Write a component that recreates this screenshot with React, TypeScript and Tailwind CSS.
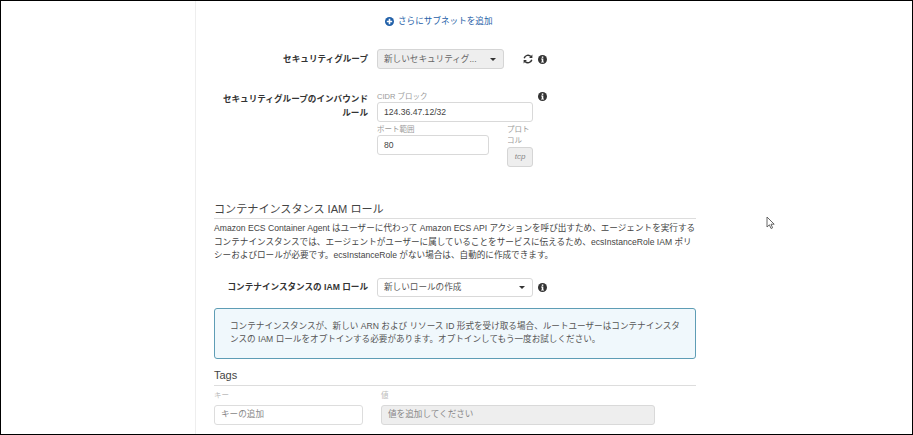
const font = "font-['Liberation_Sans','Noto_Sans_CJK_JP',sans-serif]";

function InfoIcon() {
  return (
    <svg width="9" height="9" viewBox="0 0 10 10" className="shrink-0">
      <circle cx="5" cy="5" r="5" fill="#333" />
      <rect x="4.2" y="1.6" width="1.7" height="1.6" fill="#fff" />
      <path d="M3.5 4h2.4v3.4h.8v1H3.4v-1h.8V5h-.7z" fill="#fff" />
    </svg>
  );
}

function RefreshIcon() {
  return (
    <svg width="10" height="10" viewBox="0 0 10 10" fill="none" className="shrink-0">
      <path d="M1.2 4.2A3.9 3.9 0 0 1 7.9 2.6" stroke="#333" strokeWidth="1.5" />
      <path d="M8.8 5.8A3.9 3.9 0 0 1 2.1 7.4" stroke="#333" strokeWidth="1.5" />
      <path d="M9.4 0.6v3.3H6.1z" fill="#333" />
      <path d="M0.6 9.4V6.1h3.3z" fill="#333" />
    </svg>
  );
}

function PlusIcon() {
  return (
    <svg width="9" height="9" viewBox="0 0 10 10" className="shrink-0">
      <circle cx="5" cy="5" r="5" fill="#1f5fa8" />
      <path d="M4.1 2h1.8v2.1H8v1.8H5.9V8H4.1V5.9H2V4.1h2.1z" fill="#fff" />
    </svg>
  );
}

function Caret() {
  return <span className="h-0 w-0 border-x-[3px] border-t-[3px] border-x-transparent border-t-[#333]" />;
}

export default function App() {
  return (
    <div className={`${font} relative flex h-[435px] w-[913px] overflow-hidden border border-black bg-white text-[8.6px] text-[#444]`}>
      <div className="w-[195px] shrink-0 border-r border-[#eeeeee]" />

      <div className="w-[482px] shrink-0 ml-[18px] flex flex-col">
        <div className="mt-[14px] ml-[171px] flex h-[12px] items-center gap-[4px] text-[#1f5fa8]">
          <PlusIcon />
          <span className="whitespace-nowrap">さらにサブネットを追加</span>
        </div>

        <div className="mt-[22px] flex items-center">
          <div className="w-[154px] whitespace-nowrap text-right font-bold text-[#333]">セキュリティグループ</div>
          <div className="ml-[9px] flex h-[20px] w-[127px] items-center justify-between rounded-[3px] border border-[#d5d5d5] bg-[#eeeeee] pl-[6px] pr-[7px] text-[#666]">
            <span className="whitespace-nowrap">新しいセキュリティグ...</span>
            <Caret />
          </div>
          <div className="ml-[19px] flex items-center gap-[5px]">
            <RefreshIcon />
            <InfoIcon />
          </div>
        </div>

        <div className="mt-[22px] flex items-start">
          <div className="w-[154px] pt-[1px] whitespace-nowrap text-right font-bold leading-[14px] text-[#333]">
            セキュリティグループのインバウンド
            <br />
            ルール
          </div>
          <div className="ml-[9px] flex w-[156px] flex-col">
            <div className="h-[11px] text-[7.5px] leading-[12px] text-[#999]">CIDR ブロック</div>
            <div className="flex h-[20px] items-center rounded-[3px] border border-[#d9d9d9] pl-[6px]">124.36.47.12/32</div>
            <div className="mt-[2px] flex">
              <div className="flex w-[112px] flex-col">
                <div className="h-[11px] text-[7.5px] leading-[12px] text-[#999]">ポート範囲</div>
                <div className="flex h-[20px] items-center rounded-[3px] border border-[#d9d9d9] pl-[6px]">80</div>
              </div>
              <div className="ml-[18px] flex w-[26px] flex-col">
                <div className="text-[7.5px] leading-[11px] text-[#999]">プロトコル</div>
                <div className="mt-[1px] flex h-[20px] items-center justify-center rounded-[3px] border border-[#d5d5d5] bg-[#eeeeee] text-[8px] italic text-[#888]">
                  tcp
                </div>
              </div>
            </div>
          </div>
          <div className="ml-[5px] pt-[1px]">
            <InfoIcon />
          </div>
        </div>

        <div className="mt-[34px] h-[18px] border-b border-[#dddddd] text-[11.1px] leading-[16px] text-[#444]">
          コンテナインスタンス IAM ロール
        </div>
        <p className="mt-[3px] leading-[13.5px] whitespace-nowrap text-[#444]">
          Amazon ECS Container Agent はユーザーに代わって Amazon ECS API アクションを呼び出すため、エージェントを実行する
          <br />
          コンテナインスタンスでは、エージェントがユーザーに属していることをサービスに伝えるため、ecsInstanceRole IAM ポリ
          <br />
          シーおよびロールが必要です。ecsInstanceRole がない場合は、自動的に作成できます。
        </p>

        <div className="mt-[15px] flex items-center">
          <div className="w-[154px] whitespace-nowrap text-right font-bold text-[#333]">コンテナインスタンスの IAM ロール</div>
          <div className="ml-[9px] flex h-[19px] w-[156px] items-center justify-between rounded-[3px] border border-[#d9d9d9] pl-[6px] pr-[7px] text-[#555]">
            <span>新しいロールの作成</span>
            <Caret />
          </div>
          <div className="ml-[5px]">
            <InfoIcon />
          </div>
        </div>

        <div className="mt-[11px] h-[51px] rounded-[3px] border border-[#5e9db5] bg-[#f0f8fc] pl-[15px] pt-[11px] leading-[13.5px] whitespace-nowrap text-[#555]">
          コンテナインスタンスが、新しい ARN および リソース ID 形式を受け取る場合、ルートユーザーはコンテナインスタ
          <br />
          ンスの IAM ロールをオプトインする必要があります。オプトインしてもう一度お試しください。
        </div>

        <div className="mt-[8px] h-[19px] border-b border-[#dddddd] text-[11px] leading-[16px] text-[#444]">Tags</div>
        <div className="mt-[3px] flex gap-[18px]">
          <div className="flex w-[149px] flex-col">
            <div className="h-[16px] text-[7.5px] leading-[14px] text-[#bbbbbb]">キー</div>
            <div className="flex h-[20px] items-center rounded-[3px] border border-[#dddddd] pl-[6px] text-[#888]">キーの追加</div>
          </div>
          <div className="flex w-[274px] flex-col">
            <div className="h-[16px] text-[7.5px] leading-[14px] text-[#bbbbbb]">値</div>
            <div className="flex h-[20px] items-center rounded-[3px] border border-[#d9d9d9] bg-[#eeeeee] pl-[6px] text-[#888]">値を追加してください</div>
          </div>
        </div>
      </div>

      <svg width="10" height="14" viewBox="0 0 10 14" fill="none" className="absolute left-[765px] top-[215px]">
        <path d="M1 1v10l2.4-2.2L5 12.5l1.6-.7L5 8.2h3.2z" fill="#fff" stroke="#555" strokeWidth="0.9" />
      </svg>
    </div>
  );
}
